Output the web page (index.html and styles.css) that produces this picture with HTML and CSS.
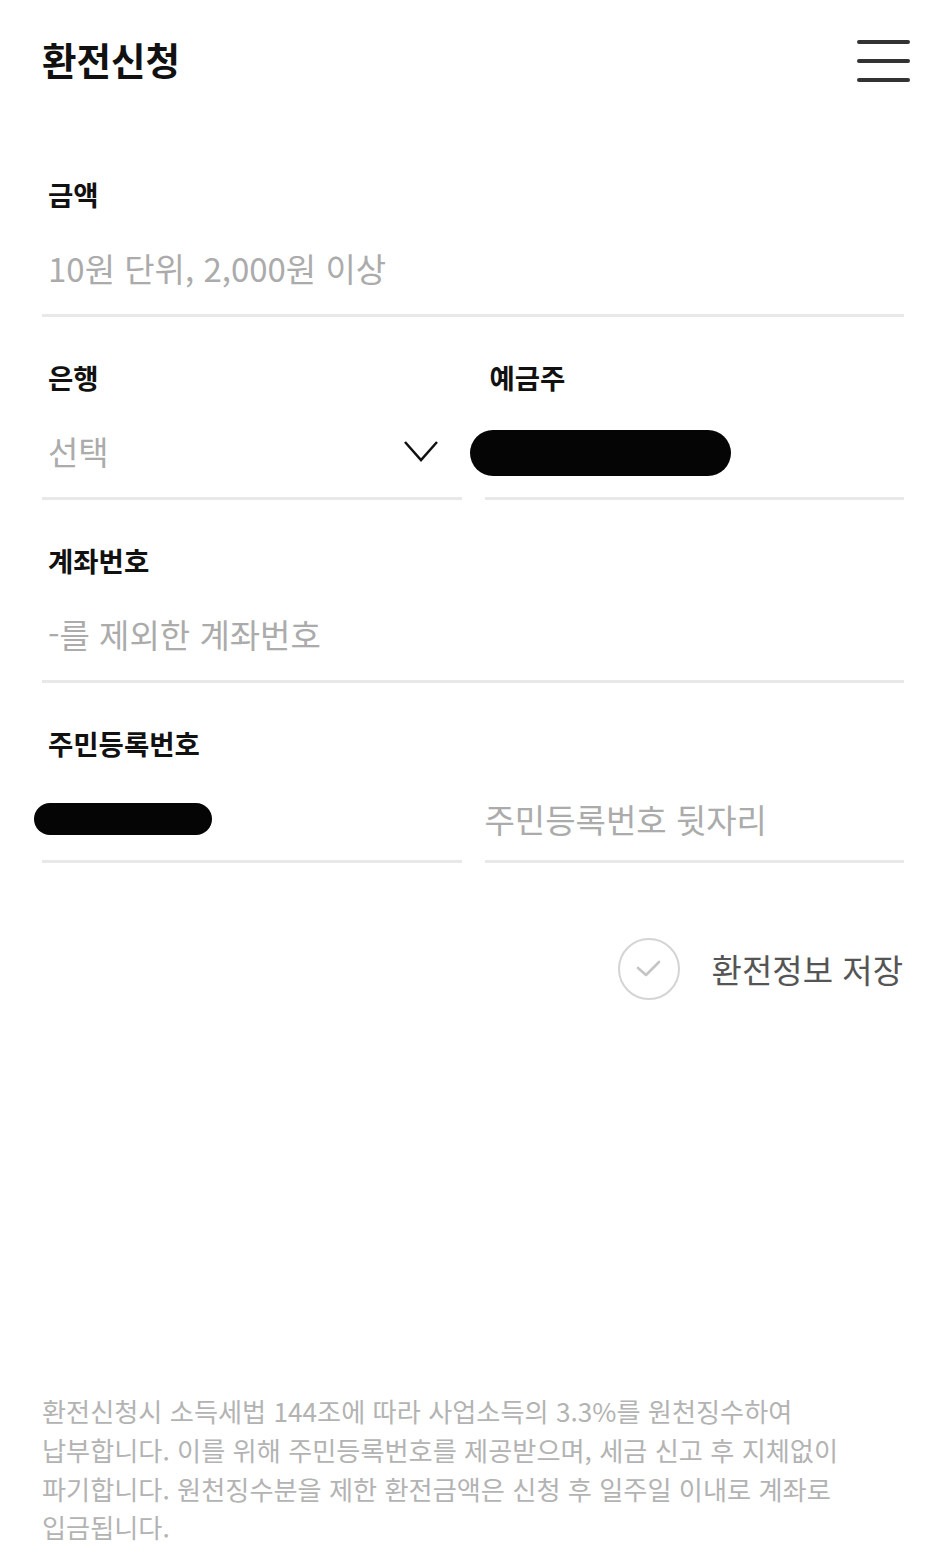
FILE: index.html
```html
<!DOCTYPE html>
<html lang="ko">
<head>
  <meta charset="UTF-8" />
  <meta name="viewport" content="width=device-width, initial-scale=1.0"/>
  <link rel="stylesheet" href="styles.css">
</head>
<body>
  <div class="page">

    <div class="topbar">
      <h1 class="title">환전신청</h1>
      <button class="menu-btn" aria-label="menu">
        <span></span><span></span><span></span>
      </button>
    </div>

    <!-- EXCHANGE FORM -->
    <form class="form">
      <div class="field">
        <div class="field-label">금액</div>
        <div class="field-row">
          <input class="field-input" type="text" placeholder="10원 단위, 2,000원 이상" />
        </div>
      </div>

      <div class="field pair">
        <div class="col">
          <div class="field-label">은행</div>
          <div class="field-row select">
            <span class="select-text">선택</span>
            <svg class="chevron" width="36" height="24" viewBox="0 0 36 24">
              <polyline points="2,3 18,21 34,3" fill="none" stroke="#111" stroke-width="2.5" />
            </svg>
          </div>
        </div>
        <div class="col">
          <div class="field-label slim">예금주</div>
          <div class="field-row">
            <div class="redact owner"></div>
          </div>
        </div>
      </div>

      <div class="field">
        <div class="field-label">계좌번호</div>
        <div class="field-row">
          <input class="field-input" type="text" placeholder="-를 제외한 계좌번호" />
        </div>
      </div>

      <div class="field">
        <div class="field-label">주민등록번호</div>
        <div class="pair">
          <div class="field-row short">
            <div class="redact rrn"></div>
          </div>
          <div class="field-row short">
            <input class="field-input flush" type="text" placeholder="주민등록번호 뒷자리" />
          </div>
        </div>
      </div>
    </form>

    <div class="save-row">
      <span class="check-circle">
        <svg width="30" height="24" viewBox="0 0 30 24">
          <polyline points="4,11 12,18 25,5" fill="none" stroke="#c4c4c4" stroke-width="2.6" stroke-linecap="round" stroke-linejoin="round" />
        </svg>
      </span>
      <span class="save-text">환전정보 저장</span>
    </div>

    <!-- NOTICE -->
    <p class="notice">
      환전신청시 소득세법 144조에 따라 사업소득의 3.3%를 원천징수하여<br>
      납부합니다. 이를 위해 주민등록번호를 제공받으며, 세금 신고 후 지체없이<br>
      파기합니다. 원천징수분을 제한 환전금액은 신청 후 일주일 이내로 계좌로<br>
      입금됩니다.
    </p>

  </div>
</body>
</html>
```

FILE: styles.css
```css
body {
  margin: 0;
  padding: 0;
  background: #fff;
  font-family: "Noto Sans CJK KR", "Noto Sans", sans-serif;
  color: #111;
}

.page {
  min-height: 100vh;
  display: flex;
  flex-direction: column;
  box-sizing: border-box;
}

/* TOP BAR */
.topbar {
  height: 116px;
  display: flex;
  align-items: center;
  justify-content: space-between;
  padding: 0 36px 0 42px;
}

.title {
  margin: 0;
  font-size: 37.5px;
  font-weight: 700;
  color: #111;
}

.menu-btn {
  width: 53px;
  height: 42px;
  margin-top: 6px;
  padding: 0;
  border: none;
  background: none;
  display: flex;
  flex-direction: column;
  justify-content: space-between;
  cursor: pointer;
}

.menu-btn span {
  display: block;
  height: 4px;
  border-radius: 2px;
  background-color: #333;
}

/* FORM */
.form {
  padding: 0 42px;
  margin-top: 60px;
}

.field + .field {
  margin-top: 42px;
}

.pair {
  display: grid;
  grid-template-columns: 1fr 1fr;
  column-gap: 23px;
}

.field-label {
  font-size: 27.5px;
  font-weight: 700;
  line-height: 36px;
  padding-left: 6px;
  color: #111;
}

.field-label.slim {
  padding-left: 5px;
}

.field-row {
  margin-top: 36px;
  height: 40px;
  padding-bottom: 26px;
  border-bottom: 3px solid #e8e8e8;
  display: flex;
  align-items: center;
}

.field-row.short {
  margin-top: 38px;
  padding-bottom: 21px;
}

.field-input {
  width: 100%;
  height: 40px;
  padding: 0 6px;
  border: none;
  outline: none;
  background: transparent;
  font-family: inherit;
  font-size: 33px;
  color: #111;
}

.field-input::placeholder {
  color: #ababab;
}

.field-input.flush {
  padding-left: 0;
}

.select {
  justify-content: space-between;
  padding-right: 23px;
}

.select-text {
  padding-left: 6px;
  font-size: 33px;
  color: #ababab;
}

.chevron {
  display: block;
}

/* blacked-out personal data */
.redact {
  flex: none;
  background-color: #050505;
}

.redact.owner {
  width: 261px;
  height: 46px;
  border-radius: 23px;
  margin-left: -15px;
  margin-top: 4px;
}

.redact.rrn {
  width: 178px;
  height: 32px;
  border-radius: 16px;
  margin-left: -8px;
}

/* SAVE TOGGLE */
.save-row {
  display: flex;
  justify-content: flex-end;
  align-items: center;
  gap: 32px;
  margin-top: 75px;
  padding: 0 43px 0 42px;
}

.check-circle {
  width: 62px;
  height: 62px;
  box-sizing: border-box;
  border: 2px solid #d4d4d4;
  border-radius: 50%;
  display: flex;
  align-items: center;
  justify-content: center;
}

.save-text {
  font-size: 33px;
  color: #555;
}

/* NOTICE TEXT */
.notice {
  margin: auto 0 0;
  padding: 0 42px 20px;
  font-size: 26.2px;
  line-height: 38.7px;
  color: #b3b3b3;
}
```
